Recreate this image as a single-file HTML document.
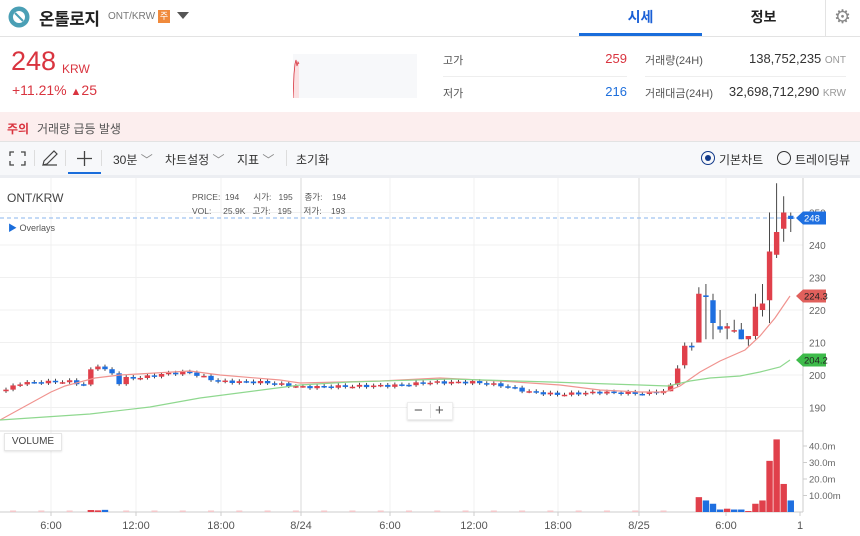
<!DOCTYPE html>
<html><head><meta charset="utf-8">
<style>
*{margin:0;padding:0;box-sizing:border-box}
body{width:860px;height:536px;overflow:hidden;background:#fff;font-family:"Liberation Sans","Noto Sans CJK KR",sans-serif;color:#333;position:relative}
.a{position:absolute;white-space:nowrap}
</style></head><body>
<svg class="a" style="left:8px;top:6px" width="22" height="22" viewBox="0 0 22 22"><circle cx="11" cy="11" r="10.5" fill="#4a9fb5"/><circle cx="11" cy="11" r="6" fill="#fff"/><line x1="7" y1="7" x2="15" y2="15" stroke="#4a9fb5" stroke-width="2"/></svg>
<div class="a" style="left:39px;top:5px;font-size:17px;font-weight:bold;color:#222;letter-spacing:-0.5px">온톨로지</div>
<div class="a" style="left:108px;top:11px;font-size:10px;color:#777">ONT/KRW</div>
<div class="a" style="left:158px;top:10px;width:12px;height:13px;background:#f08a3c;color:#fff;font-size:9px;text-align:center;line-height:13px">주</div>
<div class="a" style="left:177px;top:12px;width:0;height:0;border-left:6px solid transparent;border-right:6px solid transparent;border-top:7px solid #555"></div>
<div class="a" style="left:579px;top:0;width:123px;height:36px;text-align:center;line-height:34px;font-size:14px;font-weight:bold;color:#1a5fd6">시세</div>
<div class="a" style="left:579px;top:33px;width:123px;height:3px;background:#1a6ddb"></div>
<div class="a" style="left:702px;top:0;width:123px;height:36px;text-align:center;line-height:34px;font-size:14px;font-weight:bold;color:#222">정보</div>
<div class="a" style="left:825px;top:0;width:1px;height:36px;background:#e3e3e3"></div>
<div class="a" style="left:834px;top:6px;font-size:19px;color:#888">⚙</div>
<div class="a" style="left:0;top:36px;width:860px;height:1px;background:#e3e3e3"></div>
<div class="a" style="left:11px;top:46px;font-size:27px;color:#d9343f">248</div>
<div class="a" style="left:62px;top:62px;font-size:12px;color:#d9343f">KRW</div>
<div class="a" style="left:12px;top:82px;font-size:14px;color:#d9343f">+11.21% <span style="font-size:11px">▲</span>25</div>
<div class="a" style="left:293px;top:54px;width:124px;height:44px;background:#f7f8fa"></div>
<svg class="a" style="left:293px;top:54px" width="12" height="44"><path d="M0,44 L1,20 L2,10 L3,6 L4,12 L5,8 L6,10 L6,44Z" fill="#fbe0e2"/><path d="M0,44 L1,20 L2,10 L3,6 L4,12 L5,8 L6,10" fill="none" stroke="#d9343f" stroke-width="0.8"/></svg>
<div class="a" style="left:443px;top:52px;font-size:11px;color:#555">고가</div>
<div class="a" style="left:560px;top:51px;width:67px;text-align:right;font-size:13px;color:#d9343f">259</div>
<div class="a" style="left:443px;top:76px;width:184px;height:1px;background:#eee"></div>
<div class="a" style="left:443px;top:85px;font-size:11px;color:#555">저가</div>
<div class="a" style="left:560px;top:84px;width:67px;text-align:right;font-size:13px;color:#1e6fdc">216</div>
<div class="a" style="left:645px;top:52px;font-size:11px;color:#555">거래량(24H)</div>
<div class="a" style="left:700px;top:51px;width:146px;text-align:right;font-size:13px;color:#333">138,752,235 <span style="font-size:10px;color:#999">ONT</span></div>
<div class="a" style="left:645px;top:76px;width:201px;height:1px;background:#eee"></div>
<div class="a" style="left:645px;top:85px;font-size:11px;color:#555">거래대금(24H)</div>
<div class="a" style="left:700px;top:84px;width:146px;text-align:right;font-size:13px;color:#333">32,698,712,290 <span style="font-size:10px;color:#999">KRW</span></div>
<div class="a" style="left:0;top:112px;width:860px;height:29px;background:#fceeee"></div>
<div class="a" style="left:7px;top:120px;font-size:12px;font-weight:bold;color:#d9343f">주의</div>
<div class="a" style="left:37px;top:120px;font-size:12px;color:#555">거래량 급등 발생</div>
<div class="a" style="left:0;top:141px;width:860px;height:1px;background:#e3e3e3"></div>
<div class="a" style="left:0;top:142px;width:860px;height:33px;background:#f7f8fa"></div>
<svg class="a" style="left:9px;top:151px" width="17" height="15" fill="none" stroke="#444" stroke-width="1.3"><path d="M1,5V1H5M12,1H16V5M16,10V14H12M5,14H1V10"/></svg>
<div class="a" style="left:34px;top:150px;width:1px;height:16px;background:#ddd"></div>
<svg class="a" style="left:41px;top:149px" width="18" height="18" fill="none" stroke="#444" stroke-width="1.2"><path d="M2,16L3,12L13,2L16,5L6,15Z M2,16H16"/></svg>
<div class="a" style="left:65px;top:150px;width:1px;height:16px;background:#ddd"></div>
<svg class="a" style="left:76px;top:150px" width="17" height="17" stroke="#444" stroke-width="1.3"><path d="M8.5,1V16M1,8.5H16"/></svg>
<div class="a" style="left:68px;top:172px;width:33px;height:2px;background:#1a6ddb"></div>
<div class="a" style="left:101px;top:150px;width:1px;height:16px;background:#ddd"></div>
<div class="a" style="left:113px;top:151px;font-size:12px;color:#333">30분 <span style="color:#888">﹀</span></div>
<div class="a" style="left:165px;top:151px;font-size:12px;color:#333">차트설정 <span style="color:#888">﹀</span></div>
<div class="a" style="left:237px;top:151px;font-size:12px;color:#333">지표 <span style="color:#888">﹀</span></div>
<div class="a" style="left:286px;top:150px;width:1px;height:16px;background:#ddd"></div>
<div class="a" style="left:296px;top:151px;font-size:12px;color:#333">초기화</div>
<div class="a" style="left:701px;top:151px;width:14px;height:14px;border:1.5px solid #123a8a;border-radius:50%"></div>
<div class="a" style="left:705px;top:155px;width:6px;height:6px;background:#123a8a;border-radius:50%"></div>
<div class="a" style="left:719px;top:151px;font-size:12px;color:#333">기본차트</div>
<div class="a" style="left:777px;top:151px;width:14px;height:14px;border:1.5px solid #333;border-radius:50%"></div>
<div class="a" style="left:795px;top:151px;font-size:12px;color:#333">트레이딩뷰</div>
<div class="a" style="left:0;top:175px;width:860px;height:3px;background:#eceef2"></div>
<svg id="c" class="a" style="left:0;top:0" width="860" height="536" font-family="Liberation Sans, sans-serif"></svg>
<div class="a" style="left:7px;top:191px;font-size:12px;color:#444">ONT/KRW</div>
<div class="a" style="left:192px;top:190px;font-size:8.5px;color:#555;line-height:14px">PRICE:&nbsp; 194 &nbsp;&nbsp;&nbsp;&nbsp; 시가: &nbsp; 195 &nbsp;&nbsp;&nbsp; 종가: &nbsp;&nbsp; 194<br>VOL: &nbsp;&nbsp;&nbsp; 25.9K &nbsp; 고가: &nbsp; 195 &nbsp;&nbsp;&nbsp; 저가: &nbsp;&nbsp; 193</div>
<div class="a" style="left:8px;top:221px;font-size:9px;color:#555"><span style="color:#1a6ddb">▶</span> Overlays</div>
<div class="a" style="left:4px;top:433px;width:58px;height:18px;border:1px solid #e6e6e6;background:#fff;font-size:10px;color:#444;text-align:center;line-height:16px;box-shadow:0 1px 2px rgba(0,0,0,.1)">VOLUME</div>
<div class="a" style="left:407px;top:402px;width:46px;height:18px;background:#fff;border:1px solid #eee;box-shadow:0 1px 2px rgba(0,0,0,.15);font-size:15px;color:#555;line-height:15px"><span style="position:absolute;left:6px">−</span><span style="position:absolute;left:22px;top:1px;width:1px;height:14px;background:#e6e6e6"></span><span style="position:absolute;left:27px">+</span></div>
<script>
var s='',X0=6,DX=7.07,R='#e0404b',B='#1e6fe0';
function y(p){return 375-(p-200)*3.25}
[250,240,230,220,210,200,190].forEach(function(p){s+='<line x1="0" x2="803" y1="'+y(p)+'" y2="'+y(p)+'" stroke="#f0f0f0"/>';s+='<text x="809" y="'+(y(p)+4)+'" font-size="10" fill="#666">'+p+'</text>';});
[51,136,221,390,474,558,726].forEach(function(x){s+='<line x1="'+x+'" x2="'+x+'" y1="178" y2="512" stroke="#f0f0f0"/>';});
[301,639].forEach(function(x){s+='<line x1="'+x+'" x2="'+x+'" y1="178" y2="512" stroke="#d8d8d8"/>';});
s+='<line x1="0" x2="803" y1="431" y2="431" stroke="#ddd"/><line x1="803" x2="803" y1="178" y2="512" stroke="#ccc"/><line x1="0" x2="803" y1="512" y2="512" stroke="#ccc"/>';
s+='<line x1="0" x2="803" y1="218" y2="218" stroke="#8ab4ee" stroke-dasharray="4,3"/>';
var k=[[0,195.5],[2,197.5],[5,197.8],[9,198],[11,197],[12,201.5],[13,203],[14,201.5],[15,200.5],[16,197.5],[17,199],[19,199.2],[23,200.5],[26,200.8],[27,200],[30,198],[36,197.8],[42,196.3],[48,196.5],[55,196.8],[60,197.7],[66,197.8],[70,196.8],[74,194.8],[78,194],[84,194.7],[90,194.3],[93,195]];
function kp(i){for(var j=0;j<k.length-1;j++){if(i>=k[j][0]&&i<=k[j+1][0]){var t=(i-k[j][0])/(k[j+1][0]-k[j][0]);return k[j][1]+t*(k[j+1][1]-k[j][1]);}}return 195}
var C=[];var prev=195;
for(var i=0;i<94;i++){var c=kp(i)+0.4*Math.sin(i*2.3);C.push([prev,c,Math.max(prev,c)+0.6,Math.min(prev,c)-0.5]);prev=c;}
var E=[[195,197,197.5,195],[197,202,203,196.5],[203,209,210,202],[209,208.5,210,207.5],[210,225,227,210],[224.5,224,228,211],[223,216,225,211],[215,214,220,213],[214.3,215,216,211],[213.5,213.8,217,213],[214,211,216,211],[211,212,212,209],[212,221,225,211],[220,222,228,218],[223,238,250,216],[237,244,259,236],[245,250,255,241],[249,248,250,244]];
C=C.concat(E);
for(var i=0;i<C.length;i++){var o=C[i][0],c=C[i][1],x=X0+i*DX,col=c>=o?R:B;
 s+='<line x1="'+x+'" x2="'+x+'" y1="'+y(C[i][2])+'" y2="'+y(C[i][3])+'" stroke="#333" stroke-width="0.9"/>';
 var t=y(Math.max(o,c)),h=Math.max(Math.abs(o-c)*3.25,1.5);
 s+='<rect x="'+(x-2.7)+'" y="'+t+'" width="5.4" height="'+h+'" fill="'+col+'"/>';}
var vol=[[12,1.2,R],[13,1,R],[14,1.3,B],[98,9,R],[99,7,B],[100,5,B],[101,1.5,B],[102,2,R],[103,1.5,B],[104,1.5,B],[105,0.6,R],[106,5,R],[107,7,R],[108,31,R],[109,44,R],[110,17,R],[111,7,B]];
for(var i=0;i<94;i++){if(i%4==1)s+='<rect x="'+(X0+i*DX-3)+'" y="510.5" width="6" height="1.5" fill="#f5c8cb"/>';}
vol.forEach(function(v){var h=v[1]*1.65;s+='<rect x="'+(X0+v[0]*DX-3.2)+'" y="'+(512-h)+'" width="6.4" height="'+h+'" fill="'+v[2]+'"/>';});
[[40,'40.0m'],[30,'30.0m'],[20,'20.0m'],[10,'10.00m']].forEach(function(v){var yy=512-v[0]*1.65;s+='<line x1="803" x2="807" y1="'+yy+'" y2="'+yy+'" stroke="#ccc"/><text x="809" y="'+(yy+3.5)+'" font-size="9.5" fill="#666">'+v[1]+'</text>';});
s+='<polyline fill="none" stroke="#f0938f" stroke-width="1.2" points="0,420 51,392 65,386 95,378 120,375 190,371 220,375 280,380 300,383 380,381 440,378 500,381 560,385 600,390 640,392 665,392 680,386 700,372 720,361 745,350 760,336 775,318 790,296"/>';
s+='<polyline fill="none" stroke="#8fd88f" stroke-width="1.2" points="0,420 90,414 150,407 200,398 300,385 350,382 450,379 550,382 640,385 668,386 690,381 710,378 740,376 760,372 780,367 790,360"/>';
function tag(yy,txt,bg,fg){s+='<path d="M796,'+yy+' L803,'+(yy-6.5)+' H826 V'+(yy+6.5)+' H803Z" fill="'+bg+'"/><text x="804" y="'+(yy+3.5)+'" font-size="9.5" fill="'+fg+'">'+txt+'</text>';}
tag(218,'248','#1e6fe0','#fff');tag(296,'224.3','#e0605c','#222');tag(360,'204.2','#3dbb4a','#222');
[[51,'6:00'],[136,'12:00'],[221,'18:00'],[301,'8/24'],[390,'6:00'],[474,'12:00'],[558,'18:00'],[639,'8/25'],[726,'6:00'],[800,'1']].forEach(function(v){s+='<line x1="'+v[0]+'" x2="'+v[0]+'" y1="512" y2="516" stroke="#ccc"/><text x="'+v[0]+'" y="529" font-size="11" fill="#555" text-anchor="middle">'+v[1]+'</text>';});
document.getElementById('c').innerHTML=s;
</script>
</body></html>
